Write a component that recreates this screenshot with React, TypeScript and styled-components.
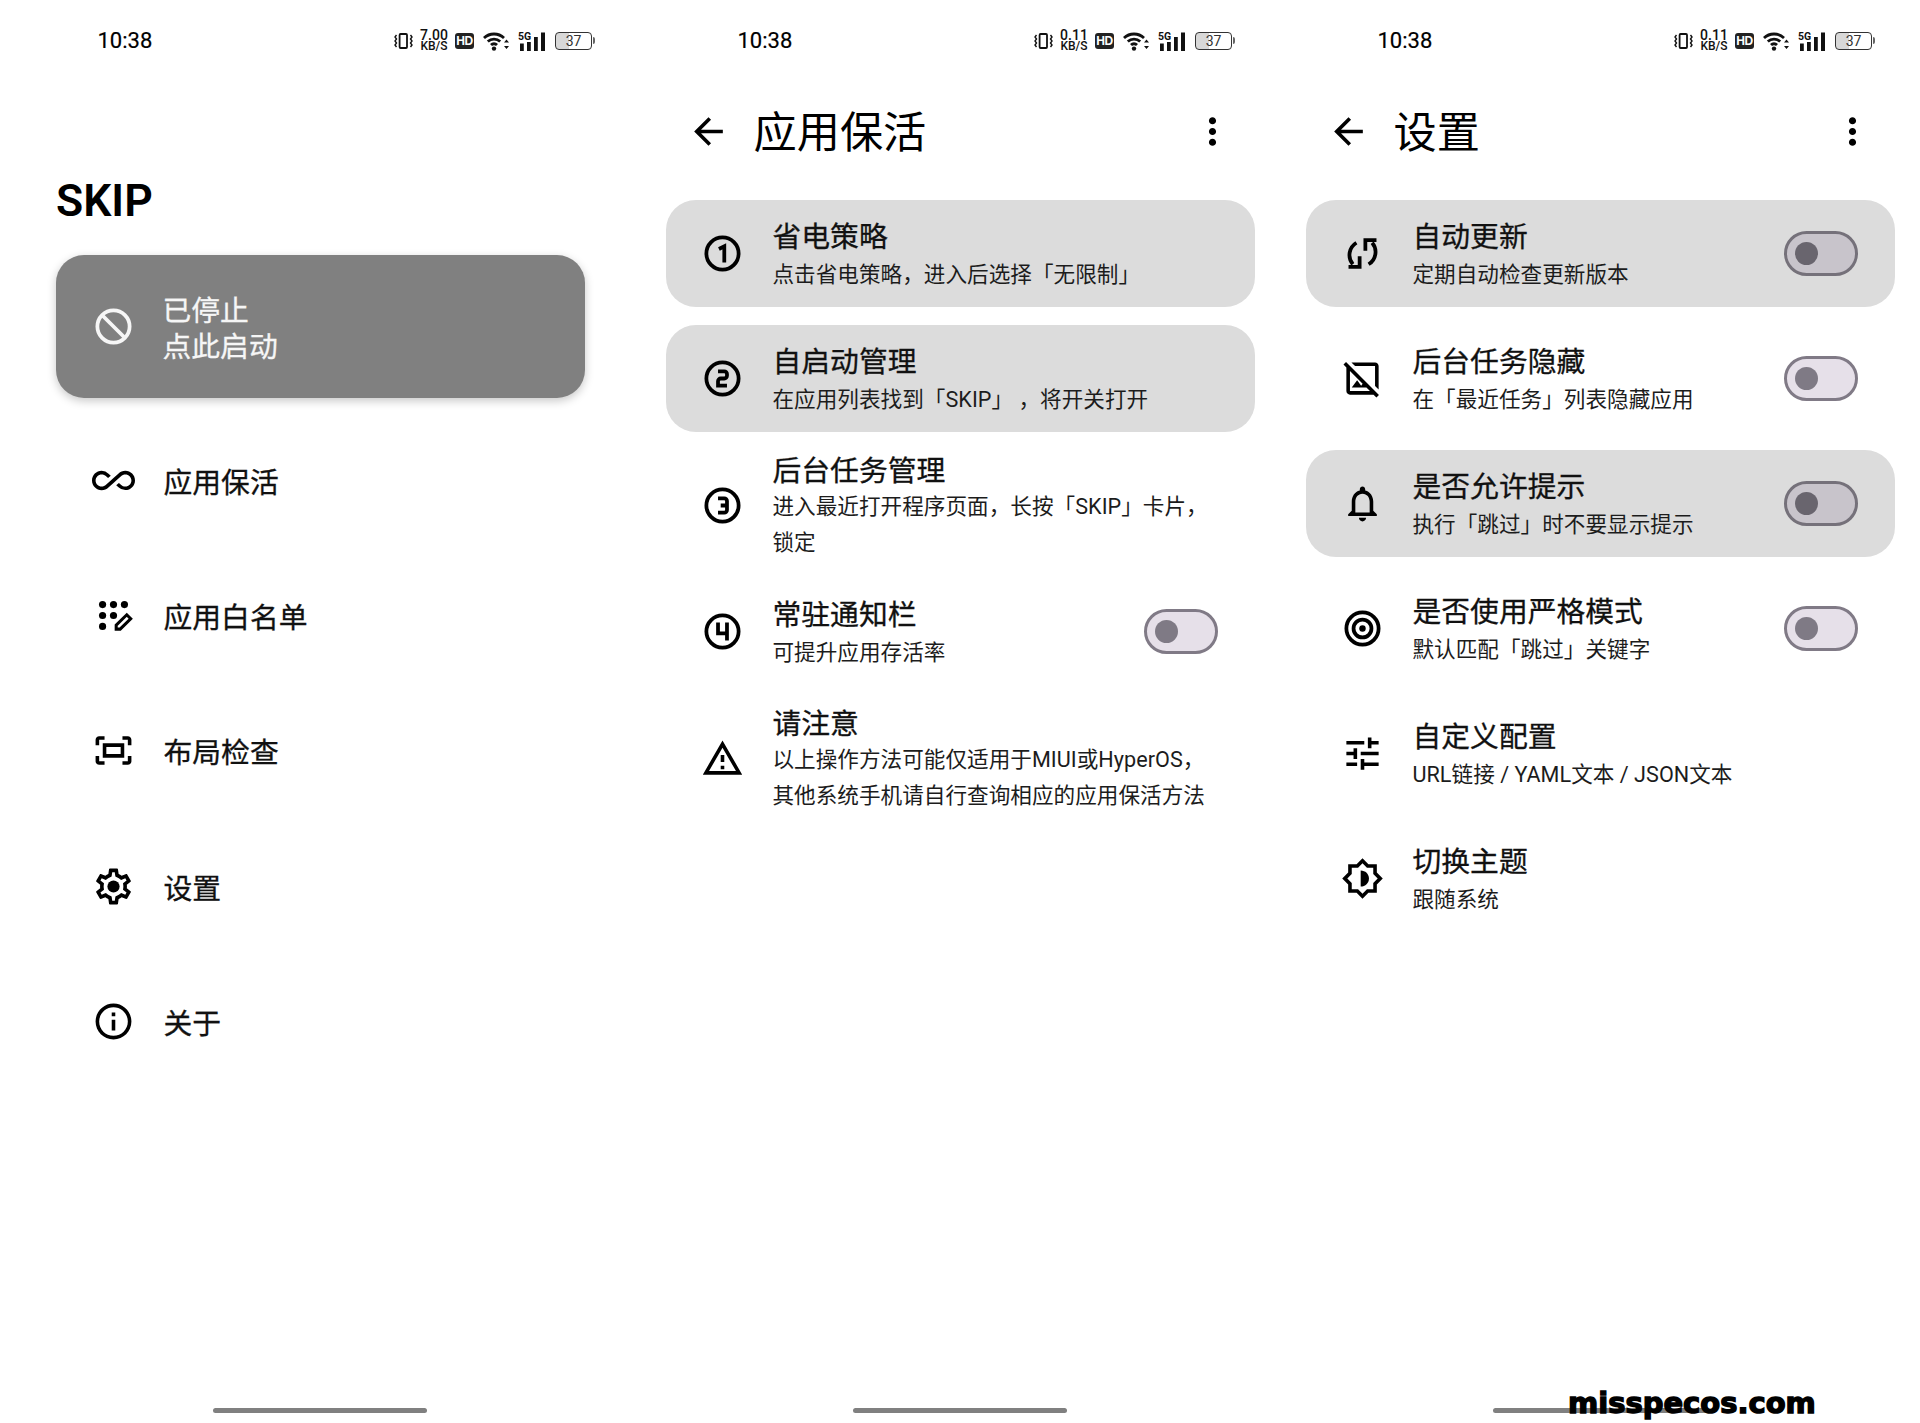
import React from "react";
import styled, { createGlobalStyle } from "styled-components";
import {
  MdAllInclusive,
  MdOutlineFitScreen,
  MdInfoOutline,
  MdArrowBack,
  MdMoreVert,
  MdOutlineHideImage,
  MdOutlineNotifications,
  MdTune,
} from "react-icons/md";

const Global = createGlobalStyle`
  html, body { margin: 0; padding: 0; background: #fff; }
  body { font-family: Roboto, "Noto Sans CJK SC", sans-serif; color: #1c1b1f; }
`;

const Page = styled.div`
  position: relative;
  display: grid;
  grid-template-columns: 640px 640px 640px;
  width: 1920px;
  height: 1423px;
  overflow: hidden;
  background: #fff;
`;

const Panel = styled.section`
  display: flex;
  flex-direction: column;
  width: 640px;
  height: 1423px;
`;

const StatusBar = styled.div`
  display: flex;
  align-items: center;
  justify-content: space-between;
  height: 80px;
  flex: none;
  padding: 1px 45px 0 97.5px;
  box-sizing: border-box;
`;

const Time = styled.span`
  font: 400 22px/24px Roboto, sans-serif;
  color: #000;
  -webkit-text-stroke: 0.2px #000;
`;

const StatusIcons = styled.div`
  display: flex;
  align-items: center;
`;

const Speed = styled.div`
  display: flex;
  flex-direction: column;
  align-items: center;
  width: 28px;
  margin: 0 7px;
  font-family: Roboto, sans-serif;
  font-weight: 500;
  color: #111;
`;

const SpeedValue = styled.span`
  font-size: 14px;
  line-height: 12px;
`;

const SpeedUnit = styled.span`
  font-size: 12px;
  line-height: 11px;
`;

const HdBadge = styled.span`
  display: flex;
  align-items: center;
  justify-content: center;
  width: 19px;
  height: 16px;
  border-radius: 3px;
  background: #222;
  color: #fff;
  font: 700 12px/16px "Liberation Sans", sans-serif;
  letter-spacing: -0.4px;
  margin-right: 9px;
`;

const SignalGap = styled.span`
  width: 9px;
`;

const Battery = styled.div`
  display: flex;
  align-items: center;
  margin-left: 9px;
`;

const BatteryBody = styled.div`
  display: flex;
  align-items: center;
  justify-content: center;
  width: 37px;
  height: 18px;
  box-sizing: border-box;
  border: 1.5px solid #333;
  border-radius: 4px;
  background: linear-gradient(90deg, #d8d8d8 37%, #fff 37%);
  font: 400 14px/16px Roboto, sans-serif;
  color: #333;
`;

const BatteryNub = styled.span`
  width: 2px;
  height: 7px;
  margin-left: 1px;
  border-radius: 0 2px 2px 0;
  background: #666;
`;

const AppTitle = styled.h1`
  margin: 91px 0 24px 56px;
  font: 600 44.5px/60px Roboto, sans-serif;
  color: #000;
`;

const IconBox = styled.span<{ $color?: string }>`
  display: flex;
  align-items: center;
  justify-content: center;
  flex: none;
  width: 43px;
  height: 43px;
  color: ${(p) => p.$color || "#000"};
  svg {
    display: block;
    width: 43px;
    height: 43px;
  }
`;

const StartCard = styled.div`
  display: flex;
  align-items: center;
  gap: 28px;
  width: 529px;
  height: 143px;
  margin-left: 56px;
  padding-left: 35.5px;
  box-sizing: border-box;
  border-radius: 28px;
  background: #808080;
  box-shadow: 0 3px 10px rgba(0, 0, 0, 0.22);
  color: #f6f6f6;
`;

const StartText = styled.div`
  font-size: 28.8px;
  font-weight: 400;
  -webkit-text-stroke: 0.3px #f6f6f6;
  line-height: 36px;
  padding-top: 4px;
`;

const Menu = styled.nav`
  display: flex;
  flex-direction: column;
  margin: 14.5px 0 0 56px;
`;

const MenuRow = styled.div`
  display: flex;
  align-items: center;
  gap: 29px;
  height: 135.3px;
  padding-left: 35.5px;
  font-size: 28.8px;
  font-weight: 400;
  -webkit-text-stroke: 0.3px #111;
  color: #111;
`;

const Handle = styled.div`
  flex: none;
  align-self: center;
  width: 214px;
  height: 5px;
  margin: auto 0 10px;
  border-radius: 3px;
  background: #808080;
`;

const Header = styled.header`
  display: flex;
  align-items: center;
  flex: none;
  height: 102px;
  padding: 0 46.5px 0 46.5px;
  box-sizing: border-box;
`;

const HeaderTitle = styled.h2`
  flex: 1;
  margin: 0 0 0 24px;
  padding-top: 6px;
  font-size: 43.2px;
  font-weight: 400;
  line-height: 60px;
  color: #000;
`;

const RowList = styled.div`
  display: flex;
  flex-direction: column;
  gap: 18px;
  margin: 18px 0 0 26px;
  width: 589px;
`;

const Row = styled.div<{ $active?: boolean; $tall?: boolean }>`
  display: flex;
  align-items: center;
  gap: 28.5px;
  height: ${(p) => (p.$tall ? 110 : 107)}px;
  padding: 0 37px 0 35px;
  box-sizing: border-box;
  border-radius: 30px;
  background: ${(p) => (p.$active ? "#dcdcdc" : "transparent")};
`;

const RowText = styled.div<{ $tall?: boolean }>`
  flex: 1;
  min-width: 0;
  padding-top: ${(p) => (p.$tall ? 4 : 5)}px;
`;

const RowTitle = styled.div`
  font-size: 28.8px;
  font-weight: 400;
  -webkit-text-stroke: 0.3px #111;
  line-height: 36px;
  color: #111;
`;

const RowSub = styled.div<{ $tall?: boolean }>`
  margin-top: ${(p) => (p.$tall ? 0 : 2)}px;
  font-size: 21.6px;
  line-height: 36px;
  letter-spacing: 0.03px;
  color: #1c1c1c;
  white-space: pre-line;
`;

const Toggle = styled.div<{ $active?: boolean }>`
  display: flex;
  align-items: center;
  flex: none;
  width: 74px;
  height: 45px;
  padding-left: 8px;
  box-sizing: border-box;
  border: 3px solid ${(p) => (p.$active ? "#75717a" : "#807a86")};
  border-radius: 23px;
  background: ${(p) => (p.$active ? "#c8c4cb" : "#e6e0e9")};
`;

const Thumb = styled.span<{ $active?: boolean }>`
  width: 23px;
  height: 23px;
  border-radius: 50%;
  background: ${(p) => (p.$active ? "#69656e" : "#7f7a85")};
`;

const Watermark = styled.div`
  position: absolute;
  left: 1568px;
  top: 1385px;
  font: 700 29px/36px "DejaVu Sans", sans-serif;
  color: #000;
  -webkit-text-stroke: 1.4px #000;
  white-space: nowrap;
`;

const Vibrate = () => (
  <svg width="19" height="16" viewBox="0 0 19 16" fill="none" stroke="#111">
    <rect x="5.6" y="1" width="7.4" height="14" rx="1" strokeWidth="1.8" />
    <path d="M2.5 2 L1 4 L2.5 6 L1 8 L2.5 10 L1 12 L2.5 14" strokeWidth="1.4" />
    <path d="M16.5 2 L18 4 L16.5 6 L18 8 L16.5 10 L18 12 L16.5 14" strokeWidth="1.4" />
  </svg>
);

const Wifi = () => (
  <svg width="26" height="20" viewBox="0 0 26 20" fill="none" stroke="#111" strokeWidth="2.8">
    <path d="M1 7 A14.5 14.5 0 0 1 21 7" />
    <path d="M4.8 10.6 A9 9 0 0 1 17.2 10.6" />
    <path d="M8 14 A4.2 4.2 0 0 1 14 14" />
    <circle cx="11" cy="17.6" r="2.2" fill="#111" stroke="none" />
    <path d="M21 11.5 L26 11.5 L23.5 8.5 Z M21 15 L26 15 L23.5 18 Z" fill="#111" stroke="none" />
  </svg>
);

const Signal = () => (
  <svg width="28" height="20" viewBox="0 0 28 20" fill="#111">
    <text x="0" y="8.5" fontFamily="Roboto, sans-serif" fontWeight="700" fontSize="10.5">5G</text>
    <rect x="2" y="12.5" width="3.8" height="7.5" />
    <rect x="9" y="11" width="3.8" height="9" />
    <rect x="16" y="6" width="3.8" height="14" />
    <rect x="23" y="1.5" width="4" height="18.5" />
  </svg>
);

const Status = ({ speed }: { speed: string }) => (
  <StatusBar>
    <Time>10:38</Time>
    <StatusIcons>
      <Vibrate />
      <Speed>
        <SpeedValue>{speed}</SpeedValue>
        <SpeedUnit>KB/S</SpeedUnit>
      </Speed>
      <HdBadge>HD</HdBadge>
      <Wifi />
      <SignalGap />
      <Signal />
      <Battery>
        <BatteryBody>37</BatteryBody>
        <BatteryNub />
      </Battery>
    </StatusIcons>
  </StatusBar>
);

const Svg24 = ({ children }: { children: React.ReactNode }) => (
  <svg viewBox="0 0 24 24" fill="currentColor">{children}</svg>
);

const Stroke24 = ({ children }: { children: React.ReactNode }) => (
  <svg viewBox="0 0 24 24" fill="none" stroke="currentColor" strokeWidth="2.1">{children}</svg>
);

const BanIcon = () => (
  <Stroke24>
    <circle cx="12" cy="12" r="9" />
    <path d="M5.7 5.7 L18.3 18.3" />
  </Stroke24>
);

const RegistrationIcon = () => (
  <svg viewBox="0 0 24 24" fill="currentColor">
    <circle cx="5.9" cy="5.9" r="2" />
    <circle cx="12" cy="5.9" r="2" />
    <circle cx="18.1" cy="5.9" r="2" />
    <circle cx="5.9" cy="12" r="2" />
    <circle cx="12" cy="12" r="2" />
    <circle cx="5.9" cy="18.1" r="2" />
    <path d="M13.5 19.6 V17.4 L19.4 11.6 L21.6 13.8 L15.7 19.6 Z" fill="none" stroke="currentColor" strokeWidth="1.7" />
  </svg>
);

const GearIcon = () => (
  <Svg24>
    <path d="M19.43 12.98c.04-.32.07-.64.07-.98 0-.34-.03-.66-.07-.98l2.11-1.65c.19-.15.24-.42.12-.64l-2-3.46c-.09-.16-.26-.25-.44-.25-.06 0-.12.01-.17.03l-2.49 1c-.52-.4-1.08-.73-1.69-.98l-.38-2.65C14.46 2.18 14.25 2 14 2h-4c-.25 0-.46.18-.49.42l-.38 2.65c-.61.25-1.17.59-1.69.98l-2.49-1c-.06-.02-.12-.03-.18-.03-.17 0-.34.09-.43.25l-2 3.46c-.13.22-.07.49.12.64l2.11 1.65c-.04.32-.07.65-.07.98 0 .33.03.66.07.98l-2.11 1.65c-.19.15-.24.42-.12.64l2 3.46c.09.16.26.25.44.25.06 0 .12-.01.17-.03l2.49-1c.52.4 1.08.73 1.69.98l.38 2.65c.03.24.24.42.49.42h4c.25 0 .46-.18.49-.42l.38-2.65c.61-.25 1.17-.59 1.69-.98l2.49 1c.06.02.12.03.18.03.17 0 .34-.09.43-.25l2-3.46c.12-.22.07-.49-.12-.64l-2.11-1.65zm-1.98-1.71c.04.31.05.52.05.73 0 .21-.02.43-.05.73l-.14 1.13.89.7 1.08.84-.7 1.21-1.27-.51-1.04-.42-.9.68c-.43.32-.84.56-1.25.73l-1.06.43-.16 1.13-.2 1.35h-1.4l-.19-1.35-.16-1.13-1.06-.43c-.43-.18-.83-.41-1.23-.71l-.91-.7-1.06.43-1.27.51-.7-1.21 1.08-.84.89-.7-.14-1.13c-.03-.31-.05-.54-.05-.74s.02-.43.05-.73l.14-1.13-.89-.7-1.08-.84.7-1.21 1.27.51 1.04.42.9-.68c.43-.32.84-.56 1.25-.73l1.06-.43.16-1.13.2-1.35h1.39l.19 1.35.16 1.13 1.06.43c.43.18.83.41 1.23.71l.91.7 1.06-.43 1.27-.51.7 1.21-1.07.85-.89.7.14 1.13z" />
    <circle cx="12" cy="12" r="3.4" />
  </Svg24>
);

const counterPaths: Record<number, string> = {
  1: "M10 9.5 L13 8 V17",
  2: "M9.5 8 H13 A1.5 1.5 0 0 1 14.5 9.5 V10.5 A1.5 1.5 0 0 1 13 12 H11 A1.5 1.5 0 0 0 9.5 13.5 V16 H14.5",
  3: "M9.5 8 H13 A1.5 1.5 0 0 1 14.5 9.5 V14.5 A1.5 1.5 0 0 1 13 16 H9.5 M11 12 H14.5",
  4: "M9.5 7 V13 H14.5 M14.5 7 V17",
};

const Counter = ({ n }: { n: number }) => (
  <Stroke24>
    <circle cx="12" cy="12" r="9" />
    <path d={counterPaths[n]} />
  </Stroke24>
);

const WarningIcon = () => (
  <Svg24>
    <path d="M12 5.99L19.53 19H4.47L12 5.99M12 2L1 21h22L12 2zm1 14h-2v2h2v-2zm0-6h-2v4h2v-4z" />
  </Svg24>
);

const SyncIcon = () => (
  <Stroke24>
    <path d="M8.6 6 A8 8 0 0 0 6.6 18" />
    <path d="M4.2 19.4 H10.4 V13.6" />
    <path d="M15.4 18 A8 8 0 0 0 17.4 6" />
    <path d="M19.8 4.6 H13.6 V10.4" />
  </Stroke24>
);

const TargetIcon = () => (
  <Stroke24>
    <circle cx="12" cy="12" r="9" />
    <circle cx="12" cy="12" r="5" />
    <circle cx="12" cy="12" r="1.8" fill="currentColor" stroke="none" />
  </Stroke24>
);

const ThemeIcon = () => (
  <Svg24>
    <path d="M20 15.31L23.31 12 20 8.69V4h-4.69L12 .69 8.69 4H4v4.69L.69 12 4 15.31V20h4.69L12 23.31 15.31 20H20v-4.69zM18 14.48V18h-3.52L12 20.48 9.52 18H6v-3.52L3.52 12 6 9.52V6h3.52L12 3.52 14.48 6H18v3.52L20.48 12 18 14.48z" />
    <path d="M11 7.5v9c2.6 0 4.6-2 4.6-4.5S13.6 7.5 11 7.5z" />
  </Svg24>
);

const menu: [React.ReactNode, string][] = [
  [<MdAllInclusive />, "应用保活"],
  [<RegistrationIcon />, "应用白名单"],
  [<MdOutlineFitScreen />, "布局检查"],
  [<GearIcon />, "设置"],
  [<MdInfoOutline />, "关于"],
];

type Item = {
  icon: React.ReactNode;
  title: string;
  sub: string;
  active?: boolean;
  tall?: boolean;
  toggle?: boolean;
};

const keepAlive: Item[] = [
  { icon: <Counter n={1} />, title: "省电策略", sub: "点击省电策略，进入后选择「无限制」", active: true },
  { icon: <Counter n={2} />, title: "自启动管理", sub: "在应用列表找到「SKIP」 ，将开关打开", active: true },
  { icon: <Counter n={3} />, title: "后台任务管理", sub: "进入最近打开程序页面，长按「SKIP」卡片，\n锁定", tall: true },
  { icon: <Counter n={4} />, title: "常驻通知栏", sub: "可提升应用存活率", toggle: true },
  { icon: <WarningIcon />, title: "请注意", sub: "以上操作方法可能仅适用于MIUI或HyperOS，\n其他系统手机请自行查询相应的应用保活方法", tall: true },
];

const settings: Item[] = [
  { icon: <SyncIcon />, title: "自动更新", sub: "定期自动检查更新版本", active: true, toggle: true },
  { icon: <MdOutlineHideImage />, title: "后台任务隐藏", sub: "在「最近任务」列表隐藏应用", toggle: true },
  { icon: <MdOutlineNotifications />, title: "是否允许提示", sub: "执行「跳过」时不要显示提示", active: true, toggle: true },
  { icon: <TargetIcon />, title: "是否使用严格模式", sub: "默认匹配「跳过」关键字", toggle: true },
  { icon: <MdTune />, title: "自定义配置", sub: "URL链接 / YAML文本 / JSON文本" },
  { icon: <ThemeIcon />, title: "切换主题", sub: "跟随系统" },
];

const DetailPanel = ({ title, items }: { title: string; items: Item[] }) => (
  <Panel>
    <Status speed="0.11" />
    <Header>
      <IconBox><MdArrowBack /></IconBox>
      <HeaderTitle>{title}</HeaderTitle>
      <IconBox><MdMoreVert /></IconBox>
    </Header>
    <RowList>
      {items.map((it) => (
        <Row key={it.title} $active={it.active} $tall={it.tall}>
          <IconBox>{it.icon}</IconBox>
          <RowText $tall={it.tall}>
            <RowTitle>{it.title}</RowTitle>
            <RowSub $tall={it.tall}>{it.sub}</RowSub>
          </RowText>
          {it.toggle && (
            <Toggle $active={it.active}>
              <Thumb $active={it.active} />
            </Toggle>
          )}
        </Row>
      ))}
    </RowList>
    <Handle />
  </Panel>
);

export default function App() {
  return (
    <Page>
      <Global />
      <Panel>
        <Status speed="7.00" />
        <AppTitle>SKIP</AppTitle>
        <StartCard>
          <IconBox $color="#f6f6f6"><BanIcon /></IconBox>
          <StartText>已停止<br />点此启动</StartText>
        </StartCard>
        <Menu>
          {menu.map(([icon, label]) => (
            <MenuRow key={label}>
              <IconBox>{icon}</IconBox>
              <span>{label}</span>
            </MenuRow>
          ))}
        </Menu>
        <Handle />
      </Panel>
      <DetailPanel title="应用保活" items={keepAlive} />
      <DetailPanel title="设置" items={settings} />
      <Watermark>misspecos.com</Watermark>
    </Page>
  );
}
